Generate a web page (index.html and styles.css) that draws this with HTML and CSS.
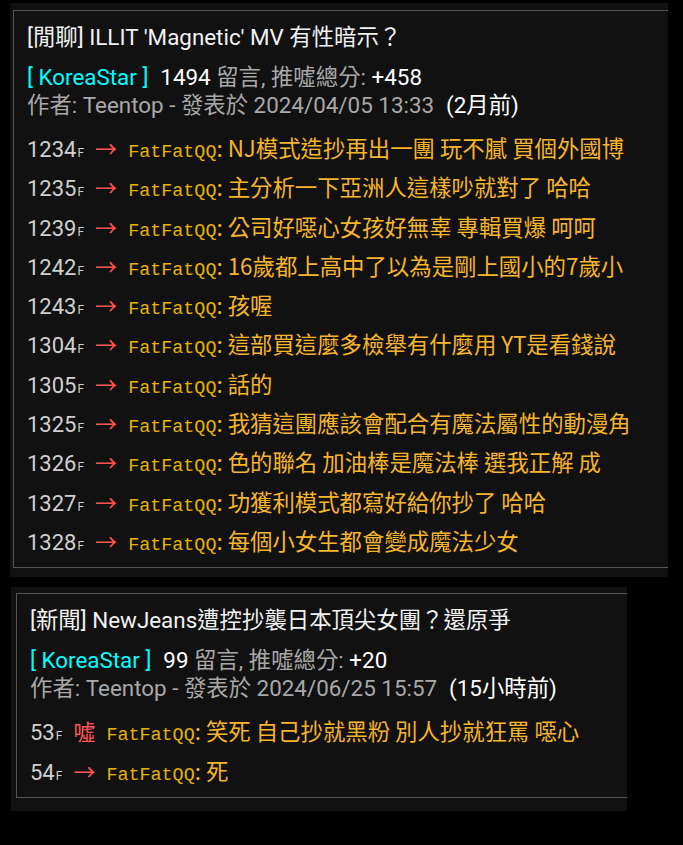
FILE: index.html
```html
<!DOCTYPE html>
<html lang="zh-Hant">

<head>
    <meta charset="UTF-8">
    <meta name="viewport" content="width=device-width, initial-scale=1.0">
    <title>KoreaStar</title>
    <link rel="stylesheet" href="styles.css">
</head>

<body>
    <div class="post post-first">
        <div class="post-box">
            <div class="post-title">[閒聊] ILLIT 'Magnetic' MV 有性暗示？</div>
            <div class="post-meta"><span class="board">[ KoreaStar ]</span><span class="hi">1494</span> 留言, 推噓總分: <span class="hi">+458</span></div>
            <div class="post-meta">作者: Teentop - 發表於 2024/04/05 13:33<span class="ago">(2月前)</span></div>
            <ul class="comments">
                <li><span class="floor">1234<small>F</small></span><span class="tag">→</span><span class="user">FatFatQQ</span><span class="msg">: NJ模式造抄再出一團 玩不膩 買個外國博</span></li>
                <li><span class="floor">1235<small>F</small></span><span class="tag">→</span><span class="user">FatFatQQ</span><span class="msg">: 主分析一下亞洲人這樣吵就對了 哈哈</span></li>
                <li><span class="floor">1239<small>F</small></span><span class="tag">→</span><span class="user">FatFatQQ</span><span class="msg">: 公司好噁心女孩好無辜 專輯買爆 呵呵</span></li>
                <li><span class="floor">1242<small>F</small></span><span class="tag">→</span><span class="user">FatFatQQ</span><span class="msg">: 16歲都上高中了以為是剛上國小的7歲小</span></li>
                <li><span class="floor">1243<small>F</small></span><span class="tag">→</span><span class="user">FatFatQQ</span><span class="msg">: 孩喔</span></li>
                <li><span class="floor">1304<small>F</small></span><span class="tag">→</span><span class="user">FatFatQQ</span><span class="msg">: 這部買這麼多檢舉有什麼用 YT是看錢說</span></li>
                <li><span class="floor">1305<small>F</small></span><span class="tag">→</span><span class="user">FatFatQQ</span><span class="msg">: 話的</span></li>
                <li><span class="floor">1325<small>F</small></span><span class="tag">→</span><span class="user">FatFatQQ</span><span class="msg">: 我猜這團應該會配合有魔法屬性的動漫角</span></li>
                <li><span class="floor">1326<small>F</small></span><span class="tag">→</span><span class="user">FatFatQQ</span><span class="msg">: 色的聯名 加油棒是魔法棒 選我正解 成</span></li>
                <li><span class="floor">1327<small>F</small></span><span class="tag">→</span><span class="user">FatFatQQ</span><span class="msg">: 功獲利模式都寫好給你抄了 哈哈</span></li>
                <li><span class="floor">1328<small>F</small></span><span class="tag">→</span><span class="user">FatFatQQ</span><span class="msg">: 每個小女生都會變成魔法少女</span></li>
            </ul>
        </div>
    </div>

    <div class="post post-second">
        <div class="post-box">
            <div class="post-title">[新聞] NewJeans遭控抄襲日本頂尖女團？還原爭</div>
            <div class="post-meta"><span class="board">[ KoreaStar ]</span><span class="hi">99</span> 留言, 推噓總分: <span class="hi">+20</span></div>
            <div class="post-meta">作者: Teentop - 發表於 2024/06/25 15:57<span class="ago">(15小時前)</span></div>
            <ul class="comments">
                <li><span class="floor">53<small>F</small></span><span class="tag boo">噓</span><span class="user">FatFatQQ</span><span class="msg">: 笑死 自己抄就黑粉 別人抄就狂罵 噁心</span></li>
                <li><span class="floor">54<small>F</small></span><span class="tag">→</span><span class="user">FatFatQQ</span><span class="msg">: 死</span></li>
            </ul>
        </div>
    </div>
</body>

</html>
```

FILE: styles.css
```css
body {
    margin: 0;
    padding-top: 3px;
    background-color: #000;
    font-family: Roboto, "Noto Sans CJK TC", sans-serif;
    font-size: 22.4px;
    color: #eee;
}

.post {
    background-color: #111;
    overflow: hidden;
}

.post-first {
    width: 655px;
    margin-left: 10px;
    padding: 7px 0 9px 3px;
}

.post-second {
    width: 611px;
    margin-left: 11px;
    margin-top: 10px;
    padding: 6px 0 13px 5px;
}

.post-box {
    width: 900px;
    border: 1px solid #555;
    padding: 11px 13px 7px;
    white-space: nowrap;
}

.post-title {
    height: 30px;
    line-height: 30px;
    color: #f2f2f2;
}

.post-meta {
    height: 28px;
    line-height: 28px;
    color: #a8a8a8;
}

.post-title + .post-meta {
    margin-top: 11px;
}

.board {
    color: #0ff;
    margin-right: 12px;
}

.hi {
    color: #fff;
}

.ago {
    color: #fff;
    margin-left: 12px;
}

.comments {
    list-style: none;
    margin: 9px 0 0;
    padding: 0;
}

.comments li {
    height: 39.3px;
    line-height: 39.3px;
}

.floor {
    color: #d0d0d0;
    font-size: 22px;
}

.floor small {
    font-size: 12px;
    margin-left: 1px;
}

.tag {
    display: inline-block;
    margin: 0 11px 0 11px;
    color: #f55;
    font-family: "Noto Sans CJK TC", sans-serif;
    font-size: 22px;
}

.user {
    font-family: "Liberation Mono", monospace;
    font-size: 18.4px;
    color: #e6b400;
}

.msg {
    font-family: "Noto Sans CJK TC", sans-serif;
    color: #f7b52c;
}
```
